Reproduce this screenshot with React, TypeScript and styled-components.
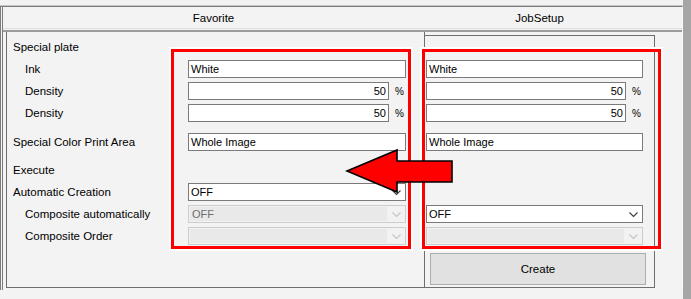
import React from 'react'
import styled, { createGlobalStyle } from 'styled-components'

const GlobalStyle = createGlobalStyle`
  html, body {
    margin: 0;
    padding: 0;
    background: #f3f3f3;
  }
  body {
    font-family: 'Liberation Sans', Arial, sans-serif;
    font-size: 11.5px;
    color: #000;
  }
`

const Chevron: React.FC<{ disabled?: boolean }> = ({ disabled }) => (
  <svg width="9" height="6" viewBox="0 0 9 6">
    <polyline
      points="0.5,0.5 4.5,4.5 8.5,0.5"
      fill="none"
      stroke={disabled ? '#c4c4c4' : '#3c3c3c'}
      strokeWidth="1.1"
    />
  </svg>
)

type Ctl =
  | { kind: 'text'; value: string }
  | { kind: 'num'; value: string }
  | { kind: 'combo'; value: string; disabled?: boolean }
  | null

interface RowDef {
  label: string
  sub?: boolean
  gap?: number
  fav: Ctl
  job: Ctl
}

const rows: RowDef[] = [
  { label: 'Special plate', fav: null, job: null },
  { label: 'Ink', sub: true, fav: { kind: 'text', value: 'White' }, job: { kind: 'text', value: 'White' } },
  { label: 'Density', sub: true, fav: { kind: 'num', value: '50' }, job: { kind: 'num', value: '50' } },
  { label: 'Density', sub: true, fav: { kind: 'num', value: '50' }, job: { kind: 'num', value: '50' } },
  {
    label: 'Special Color Print Area',
    gap: 7,
    fav: { kind: 'text', value: 'Whole Image' },
    job: { kind: 'text', value: 'Whole Image' },
  },
  { label: 'Execute', gap: 6, fav: null, job: null },
  { label: 'Automatic Creation', fav: { kind: 'combo', value: 'OFF' }, job: null },
  {
    label: 'Composite automatically',
    sub: true,
    fav: { kind: 'combo', value: 'OFF', disabled: true },
    job: { kind: 'combo', value: 'OFF' },
  },
  {
    label: 'Composite Order',
    sub: true,
    fav: { kind: 'combo', value: '', disabled: true },
    job: { kind: 'combo', value: '', disabled: true },
  },
]

const Control: React.FC<{ ctl: Ctl; wide: number }> = ({ ctl, wide }) => {
  if (!ctl) return null
  if (ctl.kind === 'text') return <Field $w={wide}>{ctl.value}</Field>
  if (ctl.kind === 'num')
    return (
      <NumWrap>
        <Field $w={wide - 17} $right>
          {ctl.value}
        </Field>
        <Unit>%</Unit>
      </NumWrap>
    )
  return (
    <Combo $w={wide} $disabled={ctl.disabled}>
      <ComboText $disabled={ctl.disabled}>{ctl.value}</ComboText>
      <ComboArrow>
        <Chevron disabled={ctl.disabled} />
      </ComboArrow>
    </Combo>
  )
}

export default function App() {
  return (
    <>
      <GlobalStyle />
      <Page>
        <Main>
          <Header>
            <HeadCell>Favorite</HeadCell>
            <HeadCell>JobSetup</HeadCell>
            <span />
          </Header>
          <Body>
            <FavBox>
              {rows.map((r, i) => (
                <Row key={i} $gap={r.gap}>
                  <Label $sub={r.sub}>{r.label}</Label>
                  <Control ctl={r.fav} wide={218} />
                </Row>
              ))}
            </FavBox>
            <JobBox>
              {rows.map((r, i) => (
                <JobRow key={i} $gap={r.gap}>
                  <Control ctl={r.job} wide={217} />
                </JobRow>
              ))}
              <CreateButton>Create</CreateButton>
            </JobBox>
          </Body>
        </Main>
        <ScrollStrip />
        <Frame style={{ left: 171, width: 240 }} />
        <Frame style={{ left: 422, width: 239 }} />
        <Arrow width="110" height="48" viewBox="0 0 110 48">
          <polygon
            points="2,24 52,3 52,14 107,14 107,35 52,35 52,45"
            fill="#ff0000"
            stroke="#000"
            strokeWidth="1.6"
            strokeLinejoin="miter"
          />
        </Arrow>
      </Page>
    </>
  )
}

const Page = styled.div`
  position: relative;
  width: 691px;
  height: 299px;
  display: flex;
  padding-top: 6px;
  box-sizing: border-box;
  overflow: hidden;
`

const Main = styled.div`
  width: 683px;
  box-sizing: border-box;
  border-left: 3px double #7c7c7c;
  border-right: 1px solid #fcfcfc;
  border-top: 1px solid #7c7c7c;
  box-shadow: 0 -1px 0 #c4c4c4;
  height: 284px;
`

const Header = styled.div`
  display: grid;
  grid-template-columns: 421px 231px 1fr;
  height: 21px;
  align-items: center;
  border-bottom: 1px solid #dedede;
  margin-bottom: 1px;
`

const HeadCell = styled.div`
  text-align: center;
  padding-top: 1px;
`

const Body = styled.div`
  display: flex;
  border-top: 2px solid #9c9c9c;
  padding-left: 3px;
  height: 258px;
  box-sizing: border-box;
`

const FavBox = styled.div`
  width: 419px;
  box-sizing: border-box;
  border-left: 1px solid #6e6e6e;
  border-right: 1px solid #6e6e6e;
  border-bottom: 1px solid #6e6e6e;
  padding: 4px 0 0 6px;
  display: flex;
  flex-direction: column;
`

const JobBox = styled.div`
  width: 230px;
  margin-top: 3px;
  box-sizing: border-box;
  border-top: 1px solid #6e6e6e;
  border-right: 1px solid #6e6e6e;
  border-bottom: 1px solid #6e6e6e;
  padding-left: 1px;
  display: flex;
  flex-direction: column;
`

const Row = styled.div<{ $gap?: number }>`
  display: grid;
  grid-template-columns: 175px 218px;
  align-items: center;
  height: 22px;
  margin-top: ${p => p.$gap || 0}px;
`

const JobRow = styled.div<{ $gap?: number }>`
  display: flex;
  align-items: center;
  height: 22px;
  margin-top: ${p => p.$gap || 0}px;
`

const Label = styled.div<{ $sub?: boolean }>`
  padding-left: ${p => (p.$sub ? 12 : 0)}px;
  white-space: nowrap;
`

const Field = styled.div<{ $w: number; $right?: boolean }>`
  width: ${p => p.$w}px;
  height: 18px;
  box-sizing: border-box;
  border: 1px solid #7a7a7a;
  background: #fff;
  font-size: 11px;
  line-height: 16px;
  padding: 0 2px;
  text-align: ${p => (p.$right ? 'right' : 'left')};
  white-space: nowrap;
`

const NumWrap = styled.div`
  display: flex;
  align-items: center;
`

const Unit = styled.span`
  margin-left: 6px;
  font-size: 10px;
`

const Combo = styled.div<{ $w: number; $disabled?: boolean }>`
  width: ${p => p.$w}px;
  height: 18px;
  box-sizing: border-box;
  border: 1px solid ${p => (p.$disabled ? '#cccccc' : '#7a7a7a')};
  background: ${p => (p.$disabled ? '#f2f2f2' : '#fff')};
  display: flex;
  align-items: stretch;
`

const ComboText = styled.div<{ $disabled?: boolean }>`
  flex: 1;
  font-size: 11px;
  line-height: ${p => (p.$disabled ? 14 : 16)}px;
  padding-left: 2px;
  margin: ${p => (p.$disabled ? '1px 0 1px 1px' : '0')};
  background: ${p => (p.$disabled ? '#e9e9e9' : 'transparent')};
  color: ${p => (p.$disabled ? '#6d6d6d' : '#000')};
`

const ComboArrow = styled.div`
  width: 18px;
  display: flex;
  align-items: center;
  justify-content: center;
  padding-top: 1px;
`

const CreateButton = styled.div`
  margin: 6px 0 0 4px;
  width: 216px;
  height: 32px;
  box-sizing: border-box;
  background: #e1e1e1;
  border: 1px solid #adadad;
  display: flex;
  align-items: center;
  justify-content: center;
`

const ScrollStrip = styled.div`
  width: 8px;
  margin-top: -6px;
  height: 299px;
  background: #a6a6a6;
`

const Frame = styled.div`
  position: absolute;
  top: 49px;
  height: 200px;
  box-sizing: border-box;
  border: 3px solid #ff0000;
  box-shadow: 0 0 0 2px #fff;
  pointer-events: none;
`

const Arrow = styled.svg`
  position: absolute;
  left: 345px;
  top: 147px;
`
